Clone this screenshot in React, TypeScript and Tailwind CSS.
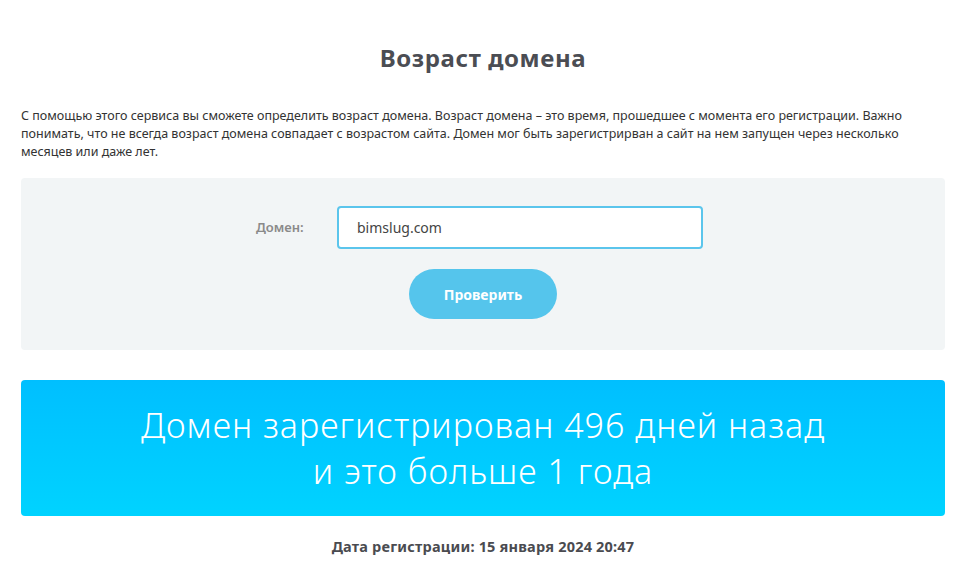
export default function App() {
  return (
    <main
      className="min-h-screen bg-white pl-[21px] pr-[29px] text-[#3b3d42]"
      style={{ fontFamily: '"Noto Sans", "Open Sans", sans-serif' }}
    >
      <h1 className="pt-[42px] text-center text-[24px] font-bold leading-[32px] tracking-[0.6px] text-[#4b4d53]">
        Возраст домена
      </h1>

      <p className="mt-[33px] text-[12.5px] leading-[18px] text-[#333]">
        С помощью этого сервиса вы сможете определить возраст домена. Возраст домена – это время, прошедшее с момента его регистрации. Важно
        <br />
        понимать, что не всегда возраст домена совпадает с возрастом сайта. Домен мог быть зарегистрирван а сайт на нем запущен через несколько
        <br />
        месяцев или даже лет.
      </p>

      <section className="mt-[17px] flex flex-col items-center rounded-[4px] bg-[#f2f5f6] pb-[31px] pt-[28px]">
        <div className="mr-[7px] flex items-center">
          <label className="w-[81px] text-[13px] font-semibold text-[#8a8a8a]">Домен:</label>
          <input
            defaultValue="bimslug.com"
            className="h-[43px] w-[366px] rounded-[4px] border-2 border-[#5bc5ec] bg-white px-[18px] text-[14px] text-[#444] outline-none"
          />
        </div>
        <button className="mt-[20px] h-[50px] w-[148px] rounded-full bg-[#55c5ec] text-[14px] font-bold text-white">
          Проверить
        </button>
      </section>

      <section className="mt-[30px] flex h-[136px] flex-col items-center justify-center rounded-[4px] bg-gradient-to-b from-[#00bfff] to-[#00d3ff] text-[34px] font-light leading-[46px] tracking-[1px] text-white">
        <div>Домен зарегистрирован 496 дней назад</div>
        <div>и это больше 1 года</div>
      </section>

      <p className="mt-[20px] text-center text-[14.5px] font-bold tracking-[0.2px] text-[#4a4b50]">
        Дата регистрации: 15 января 2024 20:47
      </p>
    </main>
  );
}
